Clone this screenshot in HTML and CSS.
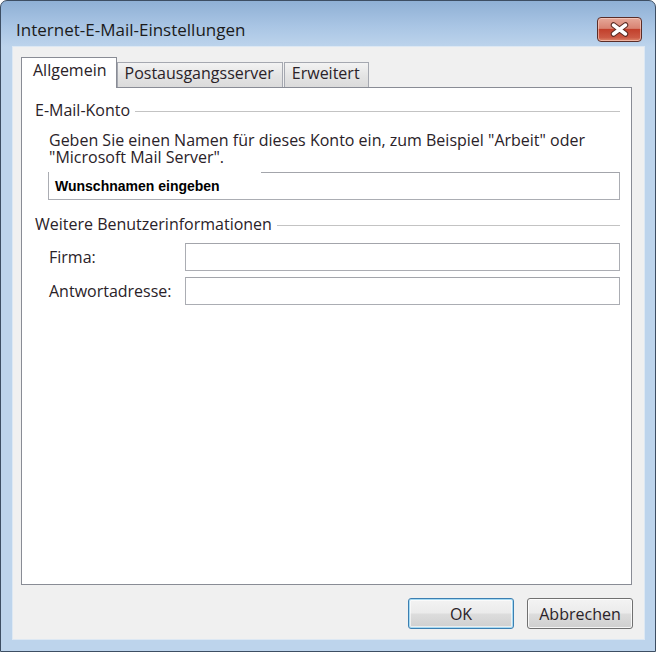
FILE: index.html
```html
<!DOCTYPE html>
<html>
<head>
	<meta charset="utf-8">
	<title>Internet-E-Mail-Einstellungen</title>
	<link rel="stylesheet" href="styles.css">
</head>
<body>
	<div class="window">
		<div class="titlebar">
			<span class="title">Internet-E-Mail-Einstellungen</span>
			<button class="close" type="button">
				<svg width="21" height="15" viewBox="0 0 21 15">
					<path d="M4.5 3 L16.5 12 M16.5 3 L4.5 12" stroke="#5a2a22" stroke-width="5.5" stroke-linecap="round"/>
					<path d="M4.5 3 L16.5 12 M16.5 3 L4.5 12" stroke="#ffffff" stroke-width="3.5" stroke-linecap="round"/>
				</svg>
			</button>
		</div>

		<div class="client">
			<ul class="tabs">
				<li class="current">Allgemein</li>
				<li>Postausgangsserver</li>
				<li>Erweitert</li>
			</ul>

			<div class="panel">
				<div class="group">E-Mail-Konto</div>
				<p class="hint">Geben Sie einen Namen für dieses Konto ein, zum Beispiel "Arbeit" oder<br>"Microsoft Mail Server".</p>
				<div class="field wide"><span class="typed">Wunschnamen eingeben</span></div>

				<div class="group second">Weitere Benutzerinformationen</div>
				<div class="row">
					<label>Firma:</label>
					<div class="field"></div>
				</div>
				<div class="row">
					<label>Antwortadresse:</label>
					<div class="field"></div>
				</div>
			</div>

			<div class="buttons">
				<button type="button" class="button default">OK</button>
				<button type="button" class="button">Abbrechen</button>
			</div>
		</div>
	</div>
</body>
</html>
```

FILE: styles.css
```css
body{
	margin: 0;
	padding: 0;
	background: #ffffff;
	font: 16px/17px "Open Sans", "Noto Sans", sans-serif;
	color: #2a2228;
}

/* Window frame */
.window{
	box-sizing: border-box;
	width: 656px;
	height: 652px;
	display: flex;
	flex-direction: column;
	border: 1px solid #3d4e63;
	border-radius: 7px 7px 0 0;
	background: linear-gradient(#8fb0d5 0, #a9c5e4 25px, #bdd4ec 46px, #bdd4ec 100%);
	padding: 0 10px 11px 11px;
}

.titlebar{
	height: 45px;
	display: flex;
	align-items: flex-end;
	justify-content: space-between;
	padding: 0 3px 4px 4px;
	box-sizing: border-box;
}

.title{
	font-size: 17px;
	line-height: 20px;
	color: #1b1b1b;
	padding-bottom: 2px;
}

.close{
	width: 45px;
	height: 25px;
	padding: 0;
	border: 1px solid #5b2d27;
	border-radius: 4px;
	background: linear-gradient(#e6a899 0, #d88372 45%, #c2402c 50%, #cc5a45 85%, #e08a6e 100%);
	box-shadow: inset 0 0 0 1px rgba(255, 220, 210, 0.55);
	display: flex;
	align-items: center;
	justify-content: center;
}

/* Client area */
.client{
	flex: 1;
	display: flex;
	flex-direction: column;
	background: #f0f0f0;
	border: 1px solid #dde8f3;
	padding: 10px 11px 10px 8px;
}

.tabs{
	list-style: none;
	margin: 0 0 -1px 0;
	padding: 0;
	display: flex;
	align-items: flex-end;
}

.tabs li{
	box-sizing: border-box;
	height: 26px;
	padding: 2px 8px 0 7px;
	border: 1px solid #a5a8b0;
	border-bottom: none;
	margin-right: 1px;
	background: linear-gradient(#f3f3f3, #e4e4e4 50%, #dadada);
	line-height: 16px;
}

.tabs li.current{
	height: 31px;
	padding: 0 9px 0 11px;
	background: #ffffff;
	border-color: #898c95;
	position: relative;
	z-index: 1;
	line-height: 24px;
	margin-right: 0;
}

.panel{
	flex: 1;
	background: #ffffff;
	border: 1px solid #898c95;
	margin-right: 1px;
	padding: 14px 11px 0 13px;
}

.group{
	display: flex;
	align-items: center;
}

.group::after{
	content: "";
	flex: 1;
	border-top: 1px solid #c3c3c3;
	margin: 1px 0 0 5px;
}

.group.second{
	margin-top: 16px;
}

.hint{
	margin: 13px 0 6px 14px;
}

.field{
	box-sizing: border-box;
	height: 28px;
	border: 1px solid #abadb3;
	border-top-color: #a3a5ab;
	background: #ffffff;
	flex: 1;
	display: flex;
}

.field.wide{
	margin-left: 13px;
}

.typed{
	width: 206px;
	margin-top: -1px;
	padding-left: 6px;
	background: #ffffff;
	display: flex;
	align-items: center;
	font: bold 14px "Liberation Sans", Arial, sans-serif;
	color: #000000;
}

.row{
	display: flex;
	align-items: center;
	margin-left: 14px;
	margin-top: 6px;
}

.group + .row{
	margin-top: 10px;
}

.row label{
	width: 136px;
}

/* Buttons */
.buttons{
	display: flex;
	justify-content: flex-end;
	gap: 13px;
	margin-top: 13px;
}

.button{
	width: 106px;
	height: 31px;
	border: 1px solid #707070;
	border-radius: 3px;
	background: linear-gradient(#f3f3f3, #ebebeb 49%, #dddddd 51%, #cfcfcf);
	box-shadow: inset 0 0 0 1px rgba(255, 255, 255, 0.8);
	font: 16px "Open Sans", "Noto Sans", sans-serif;
	color: #2a2228;
	padding: 0;
}

.button.default{
	border-color: #3c7fb1;
	box-shadow: inset 0 0 0 1px #a6daf3, inset 0 0 0 2px rgba(255, 255, 255, 0.6);
}
```
